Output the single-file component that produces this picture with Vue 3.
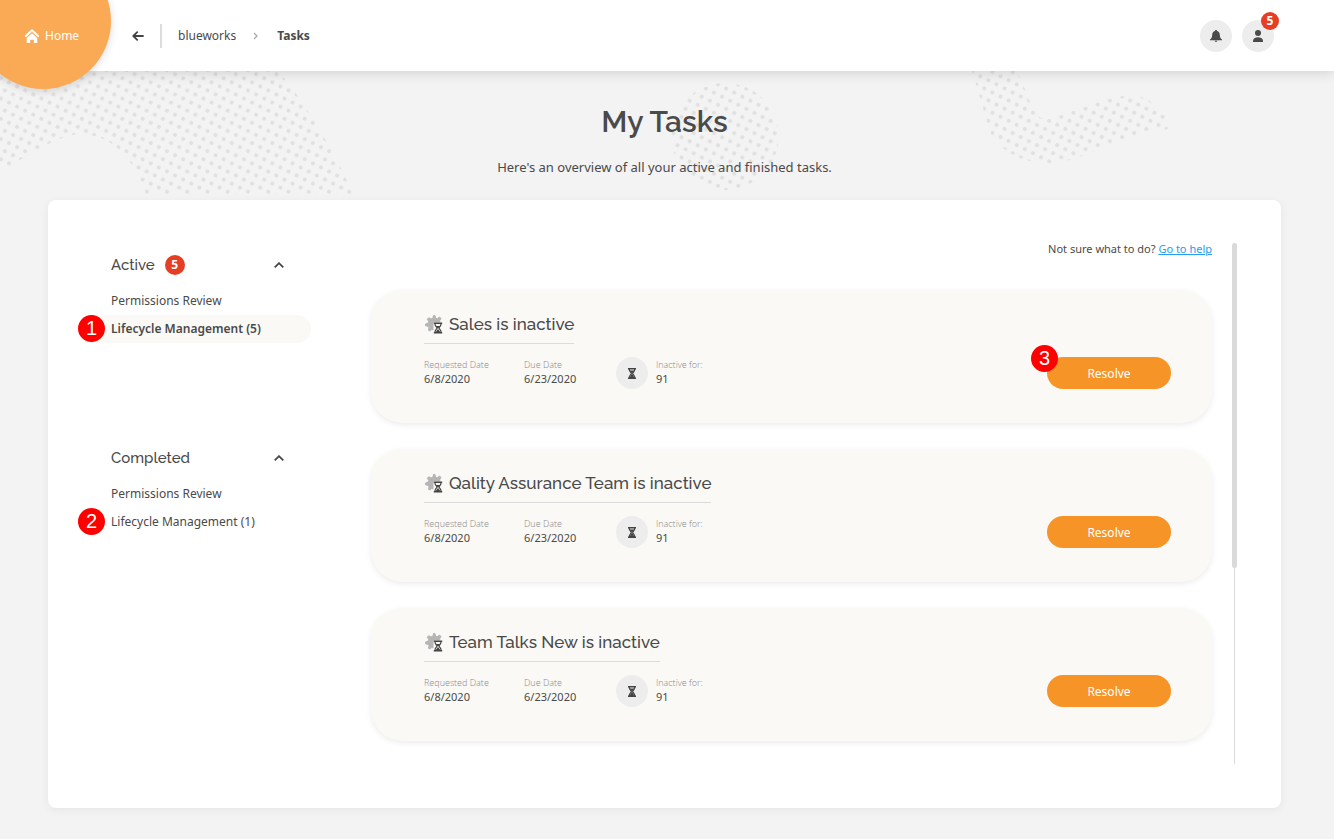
<script setup>
import { reactive } from 'vue'

const groups = reactive([
  {
    name: 'Active',
    badge: 5,
    open: true,
    items: [
      { label: 'Permissions Review' },
      { label: 'Lifecycle Management (5)', current: true, step: 1 },
    ],
  },
  {
    name: 'Completed',
    open: true,
    items: [
      { label: 'Permissions Review' },
      { label: 'Lifecycle Management (1)', step: 2 },
    ],
  },
])

const tasks = [
  { title: 'Sales is inactive', requested: '6/8/2020', due: '6/23/2020', days: 91, step: 3 },
  { title: 'Qality Assurance Team is inactive', requested: '6/8/2020', due: '6/23/2020', days: 91 },
  { title: 'Team Talks New is inactive', requested: '6/8/2020', due: '6/23/2020', days: 91 },
]
</script>

<template>
  <div class="page">
    <svg class="backdrop" width="1334" height="194" aria-hidden="true">
      <defs>
        <pattern id="dots-left" width="9.06" height="9.06" patternUnits="userSpaceOnUse" patternTransform="translate(146.7 191.7) rotate(26.57) translate(-4.53 -4.53)">
          <circle cx="4.53" cy="4.53" r="2.1" fill="#e1e1e1" />
        </pattern>
        <pattern id="dots-mid" width="9.06" height="9.06" patternUnits="userSpaceOnUse" patternTransform="translate(718 145.3) rotate(26.57) translate(-4.53 -4.53)">
          <circle cx="4.53" cy="4.53" r="2.1" fill="#e1e1e1" />
        </pattern>
        <pattern id="dots-right" width="9.06" height="9.06" patternUnits="userSpaceOnUse" patternTransform="translate(1041 137) rotate(26.57) translate(-4.53 -4.53)">
          <circle cx="4.53" cy="4.53" r="2.1" fill="#e1e1e1" />
        </pattern>
      </defs>
      <path fill="url(#dots-left)" d="M0 60H265Q285 76 302 102Q335 152 353 194H146C134 160 114 134 78 134C50 138 30 157 0 170Z" />
      <circle fill="url(#dots-mid)" cx="725" cy="136.500" r="53.500" />
      <path fill="url(#dots-right)" d="M968 60C980 92 984 118 993 138C1006 153 1022 163 1050 163C1075 163 1100 146 1140 134C1155 129 1170 132 1170 126C1164 110 1148 95 1130 95C1100 98 1070 114 1045 120C1026 112 1030 84 1008 60Z" />
    </svg>

    <header class="topbar">
      <a class="home" href="#">
        <svg width="14" height="14" viewBox="0 0 14 14" aria-hidden="true">
          <path d="M0.900 7L7 1.300L13.100 7" fill="none" stroke="#fff" stroke-width="2" stroke-linecap="round" stroke-linejoin="round" />
          <path d="M7 4.300L12.300 9V14H8.800V10.800H5.200V14H1.700V9Z" fill="#fff" />
        </svg>
        <span>Home</span>
      </a>
      <nav class="crumbs" aria-label="Breadcrumb">
        <button class="back" type="button" aria-label="Back">
          <svg width="12" height="10" viewBox="0 0 12 10"><path d="M11 5H1.500M5.200 1.200L1.300 5L5.200 8.800" fill="none" stroke="#444" stroke-width="1.800" stroke-linecap="round" stroke-linejoin="round" /></svg>
        </button>
        <a class="crumb" href="#">blueworks</a>
        <svg class="sep" width="5" height="8" viewBox="0 0 5 8" aria-hidden="true"><path d="M1 1L4 4L1 7" fill="none" stroke="#aaa" stroke-width="1.300" /></svg>
        <strong class="crumb-current">Tasks</strong>
      </nav>
      <div class="actions">
        <button class="round" type="button" aria-label="Notifications">
          <svg width="12" height="12" viewBox="0 0 12 12"><path d="M6 0C6.600 0 7 0.400 7 1C9 1.500 9.700 3 9.800 5C9.900 7.500 10.500 8.500 12 9.500V10.300H0V9.500C1.500 8.500 2.100 7.500 2.200 5C2.300 3 3 1.500 5 1C5 0.400 5.400 0 6 0ZM4.600 10.800H7.400C7.200 12.300 4.800 12.300 4.600 10.800Z" fill="#4a4a4a" /></svg>
        </button>
        <button class="round" type="button" aria-label="Profile, 5 open tasks">
          <svg width="10" height="12" viewBox="0 0 10 12"><circle cx="5" cy="3" r="3" fill="#4a4a4a" /><path d="M0 12V11C0.200 8.300 2 7.200 5 7.200S9.800 8.300 10 11V12Z" fill="#4a4a4a" /></svg>
          <span class="badge corner">5</span>
        </button>
      </div>
    </header>

    <main class="content">
      <h1>My Tasks</h1>
      <p class="lead">Here's an overview of all your active and finished tasks.</p>

      <section class="panel">
        <aside class="side">
          <div v-for="group in groups" :key="group.name" class="group">
            <button class="group-head" type="button" :aria-expanded="group.open" @click="group.open = !group.open">
              <span>{{ group.name }}</span>
              <span v-if="group.badge" class="badge">{{ group.badge }}</span>
              <svg class="caret" :class="{ closed: !group.open }" width="10" height="6" viewBox="0 0 10 6" aria-hidden="true"><path d="M0.700 5.300L5 1.200L9.300 5.300" fill="none" stroke="#444" stroke-width="1.800" /></svg>
            </button>
            <ul v-show="group.open" class="links">
              <li v-for="item in group.items" :key="item.label">
                <a href="#" :class="{ current: item.current }">{{ item.label }}</a>
                <span v-if="item.step" class="step">{{ item.step }}</span>
              </li>
            </ul>
          </div>
        </aside>

        <div class="list">
          <p class="help">Not sure what to do? <a href="#">Go to help</a></p>
          <article v-for="task in tasks" :key="task.title" class="card">
            <div class="info">
              <h2>
                <svg width="19" height="20" viewBox="0 0 19 20" aria-hidden="true">
                  <path d="M9.500 1.500H11L11.500 4L13.200 4.800L15.500 3L17 4.500L15.800 6.500V8H9V16L7.500 15.300L6.300 17L4.500 16.300L5 13.800L4 12.300L1.500 11.800V10L4 9.300L4.700 7.300L3.300 5.200L4.800 3.700L7 5L9 4Z" fill="#b5b5b5" stroke="#b5b5b5" stroke-linejoin="round" />
                  <path d="M9.800 9.300H18.200M9.800 18.700H18.200" stroke="#444" stroke-width="1.400" />
                  <path d="M11 10C11 12.500 13 13 13 14S11 15.500 11 18M17 10C17 12.500 15 13 15 14S17 15.500 17 18" fill="none" stroke="#444" stroke-width="1.200" />
                  <path d="M11.500 12H16.500L14 14.500ZM14 15L16.300 18H11.700Z" fill="#444" />
                </svg>
                <span>{{ task.title }}</span>
              </h2>
              <dl>
                <div class="date"><dt>Requested Date</dt><dd>{{ task.requested }}</dd></div>
                <div class="date"><dt>Due Date</dt><dd>{{ task.due }}</dd></div>
                <div class="idle">
                  <span class="round">
                    <svg width="8" height="11" viewBox="0 0 8 11" aria-hidden="true">
                      <path d="M0 0.700H8M0 10.300H8" stroke="#444" stroke-width="1.400" />
                      <path d="M1.200 1C1.200 4 3.300 4.500 3.300 5.500S1.200 7 1.200 10M6.800 1C6.800 4 4.700 4.500 4.700 5.500S6.800 7 6.800 10" fill="none" stroke="#444" stroke-width="1.200" />
                      <path d="M1.500 2.500H6.500L4 5.500ZM4 5.500L6.500 10H1.500Z" fill="#444" />
                    </svg>
                  </span>
                  <dt>Inactive for:</dt><dd>{{ task.days }}</dd>
                </div>
              </dl>
            </div>
            <div class="action">
              <button class="resolve" type="button">Resolve</button>
              <span v-if="task.step" class="step">{{ task.step }}</span>
            </div>
          </article>
        </div>

        <div class="scroll" aria-hidden="true"><div class="thumb"></div></div>
      </section>
    </main>
  </div>
</template>

<style>
body {
  background: #f3f3f3;
}
</style>

<style scoped>
.page {
  position: relative;
  min-height: 100vh;
  overflow: hidden;
  color: #4a4a4a;
  font-family: "Noto Sans", "Open Sans", sans-serif;
  font-size: 12px;
}
.page *, .page *::before {
  box-sizing: border-box;
}
button {
  border: 0;
  padding: 0;
  background: none;
  color: inherit;
  font: inherit;
  cursor: pointer;
}
a {
  color: inherit;
  text-decoration: none;
}
.backdrop {
  position: absolute;
  top: 0;
  left: 0;
}
.topbar {
  position: relative;
  display: flex;
  align-items: center;
  height: 71px;
  padding: 0 60px 0 25px;
  background: #fff;
  box-shadow: 0 2px 12px rgba(0, 0, 0, 0.14);
}
.topbar::before {
  content: "";
  position: absolute;
  top: -47px;
  left: -25px;
  width: 136px;
  height: 136px;
  border-radius: 50%;
  background: #faa954;
  box-shadow: 0 2px 8px rgba(0, 0, 0, 0.14);
}
.home {
  position: relative;
  display: flex;
  align-items: center;
  gap: 6px;
  width: 107px;
  color: #fff;
}
.crumbs {
  display: flex;
  align-items: center;
}
.back {
  display: flex;
  align-items: center;
  height: 24px;
  padding-right: 16px;
  border-right: 2px solid #dcdcdc;
  margin-right: 16px;
}
.sep {
  margin: 0 19px 0 17px;
}
.actions {
  display: flex;
  gap: 10px;
  margin-left: auto;
}
.round {
  position: relative;
  display: flex;
  align-items: center;
  justify-content: center;
  width: 32px;
  height: 32px;
  border-radius: 50%;
  background: #ededed;
}
.badge {
  display: flex;
  align-items: center;
  justify-content: center;
  width: 20px;
  height: 20px;
  border-radius: 50%;
  background: #e53e25;
  color: #fff;
  font-size: 12px;
  font-weight: 700;
}
.corner {
  position: absolute;
  top: -8px;
  right: -5px;
  width: 18px;
  height: 18px;
}
.content {
  position: relative;
  padding: 32px 53px 31px 48px;
}
h1 {
  margin: 0;
  text-align: center;
  font: 600 30px/38px Raleway, Lato, sans-serif;
}
.lead {
  margin: 16px 0 22px;
  text-align: center;
  font-size: 13px;
  line-height: 21px;
}
.panel {
  display: flex;
  min-height: 608px;
  padding: 43px 44px 44px 43px;
  border-radius: 8px;
  background: #fff;
  box-shadow: 0 2px 10px rgba(0, 0, 0, 0.06);
}
.side {
  flex: none;
  width: 220px;
  margin-right: 60px;
  padding-top: 12px;
}
.group {
  min-height: 193px;
}
.group-head {
  display: flex;
  align-items: center;
  gap: 10px;
  width: 100%;
  height: 20px;
  padding: 0 27px 0 20px;
  font: 500 15px/20px Raleway, Lato, sans-serif;
}
.group-head .badge {
  font: 700 12px/20px "Noto Sans", sans-serif;
}
.caret {
  margin-left: auto;
}
.closed {
  transform: rotate(180deg);
}
.links {
  margin: 12px 0 0;
  padding: 0;
  list-style: none;
}
.links li {
  position: relative;
}
.links a {
  display: block;
  height: 28px;
  padding-left: 20px;
  border-radius: 14px;
  line-height: 28px;
}
.links .current {
  background: #faf9f5;
  font-weight: 600;
}
.step {
  position: absolute;
  top: 0;
  left: -13px;
  width: 27px;
  height: 27px;
  border-radius: 50%;
  background: #f00;
  color: #fff;
  text-align: center;
  font: 20px/27px "Liberation Sans", sans-serif;
}
.list {
  flex: 1;
  display: flex;
  flex-direction: column;
  gap: 26px;
  min-width: 0;
}
.help {
  margin: -2px 0 7px;
  text-align: right;
  font-size: 11px;
  line-height: 16px;
}
.help a {
  color: #259df0;
  text-decoration: underline;
}
.card {
  display: flex;
  justify-content: space-between;
  align-items: flex-start;
  min-height: 133px;
  padding: 22px 41px 34px 53px;
  border-radius: 32px;
  background: #faf9f5;
  box-shadow: 0 2px 6px rgba(0, 0, 0, 0.08);
}
h2 {
  display: flex;
  align-items: center;
  gap: 6px;
  width: fit-content;
  height: 32px;
  margin: 0;
  padding-bottom: 7px;
  border-bottom: 1px solid #dbdbdb;
  font: 500 17px/24px Raleway, Lato, sans-serif;
}
dl {
  display: flex;
  margin: 13px 0 0;
}
.date {
  width: 100px;
  padding-top: 1px;
}
.date:nth-child(2) {
  width: 92px;
}
dt {
  color: #888;
  font-family: "Open Sans", "Noto Sans", sans-serif;
  font-size: 9px;
  font-weight: 300;
  line-height: 14px;
}
dd {
  margin: 0;
  font-size: 11px;
  line-height: 14px;
}
.idle {
  display: grid;
  grid-template-columns: 32px auto;
  grid-template-rows: 15px 14px;
  column-gap: 8px;
}
.idle dt {
  padding-top: 1px;
}
.idle .round {
  grid-row: 1 / 3;
}
.action {
  position: relative;
  margin-top: 45px;
}
.action .step {
  top: -12px;
  left: -16px;
}
.resolve {
  width: 124px;
  height: 32px;
  border-radius: 16px;
  background: #f79428;
  color: #fff;
}
.scroll {
  position: relative;
  display: flex;
  justify-content: center;
  width: 5px;
  margin-left: 20px;
  background: linear-gradient(#dadada, #dadada) center / 1px 100% no-repeat;
}
.thumb {
  width: 5px;
  height: 325px;
  border-radius: 3px;
  background: #dadada;
}
</style>
